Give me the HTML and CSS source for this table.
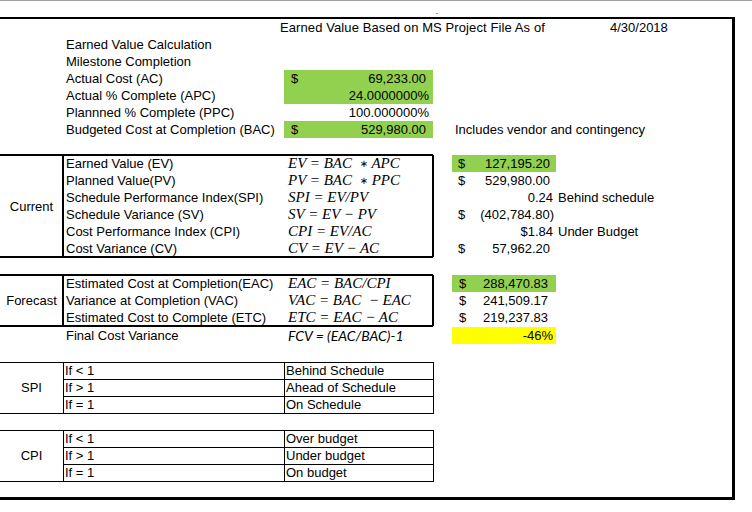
FILE: index.html
```html
<!DOCTYPE html>
<html>
<head>
<meta charset="utf-8">
<link rel="stylesheet" href="styles.css">
</head>
<body>
<div class="topline"></div>
<div class="speck"></div>
<div class="sheet">
  <div class="hdr">
    <div class="row"><span class="title">Earned Value Based on MS Project File As of</span><span class="date">4/30/2018</span></div>
    <div class="row"><span class="lbl">Earned Value Calculation</span></div>
    <div class="row"><span class="lbl">Milestone Completion</span></div>
    <div class="row"><span class="lbl">Actual Cost (AC)</span><span class="cell green acct"><span>$</span><span>69,233.00</span></span></div>
    <div class="row"><span class="lbl">Actual % Complete (APC)</span><span class="cell green num">24.0000000%</span></div>
    <div class="row"><span class="lbl">Plannned % Complete (PPC)</span><span class="cell num">100.000000%</span></div>
    <div class="row"><span class="lbl">Budgeted Cost at Completion (BAC)</span><span class="cell green acct"><span>$</span><span>529,980.00</span></span><span class="note">Includes vendor and contingency</span></div>
    <div class="row"></div>
  </div>

  <div class="grp">
    <div class="boxwrap">
      <div class="side">Current</div>
      <div class="box">
        <div class="row"><span class="blbl">Earned Value (EV)</span><span class="f">EV = BAC &nbsp;<span class="ast">∗</span> APC</span></div>
        <div class="row"><span class="blbl">Planned Value(PV)</span><span class="f">PV = BAC &nbsp;<span class="ast">∗</span> PPC</span></div>
        <div class="row"><span class="blbl">Schedule Performance Index(SPI)</span><span class="f">SPI = EV/PV</span></div>
        <div class="row"><span class="blbl">Schedule Variance (SV)</span><span class="f">SV = EV − PV</span></div>
        <div class="row"><span class="blbl">Cost Performance Index (CPI)</span><span class="f">CPI = EV/AC</span></div>
        <div class="row"><span class="blbl">Cost Variance (CV)</span><span class="f">CV = EV − AC</span></div>
      </div>
    </div>
    <div class="vals">
      <div class="row"><span class="vcell green acct"><span>$</span><span>127,195.20</span></span></div>
      <div class="row"><span class="vcell acct"><span>$</span><span>529,980.00</span></span></div>
      <div class="row"><span class="vcell num">0.24</span><span class="vnote">Behind schedule</span></div>
      <div class="row"><span class="vcell acct neg"><span>$</span><span>(402,784.80)</span></span></div>
      <div class="row"><span class="vcell num">$1.84</span><span class="vnote">Under Budget</span></div>
      <div class="row"><span class="vcell acct"><span>$</span><span>57,962.20</span></span></div>
    </div>
  </div>

  <div class="grp forecast">
    <div class="boxwrap">
      <div class="side">Forecast</div>
      <div class="box">
        <div class="row"><span class="blbl">Estimated Cost at Completion(EAC)</span><span class="f">EAC = BAC/CPI</span></div>
        <div class="row"><span class="blbl">Variance at Completion (VAC)</span><span class="f">VAC = BAC &nbsp;− EAC</span></div>
        <div class="row"><span class="blbl">Estimated Cost to Complete (ETC)</span><span class="f">ETC = EAC − AC</span></div>
      </div>
    </div>
    <div class="vals">
      <div class="row"><span class="vcell green acct fc"><span>$</span><span>288,470.83</span></span></div>
      <div class="row"><span class="vcell acct fc"><span>$</span><span>241,509.17</span></span></div>
      <div class="row"><span class="vcell acct fc"><span>$</span><span>219,237.83</span></span></div>
    </div>
  </div>

  <div class="row fcv"><span class="lbl">Final Cost Variance</span><span class="cell f2">FCV = (EAC/BAC)-1</span><span class="vcell yellow num pct">-46%</span></div>

  <div class="ctab spi">
    <div class="cside">SPI</div>
    <div>If &lt; 1</div><div>Behind Schedule</div>
    <div>If &gt; 1</div><div>Ahead of Schedule</div>
    <div>If = 1</div><div>On Schedule</div>
  </div>

  <div class="ctab cpi">
    <div class="cside">CPI</div>
    <div>If &lt; 1</div><div>Over budget</div>
    <div>If &gt; 1</div><div>Under budget</div>
    <div>If = 1</div><div>On budget</div>
  </div>
</div>
</body>
</html>
```

FILE: styles.css
```css
html, body {
  margin: 0;
  padding: 0;
  background: #fff;
}
body {
  font-family: "Liberation Sans", Arial, sans-serif;
  font-size: 13px;
  color: #000;
  width: 752px;
  height: 512px;
  overflow: hidden;
}
.topline {
  height: 1px;
  background: #a0a0a0;
}
.speck {
  margin: 12px 0 0 436px;
  width: 2px;
  height: 1px;
  background: #9a9a9a;
}
.sheet {
  margin-top: 3px;
  width: 732px;
  border-top: 2px solid #000;
  border-right: 3px solid #000;
  border-bottom: 3px solid #000;
  padding-bottom: 15px;
}
.row {
  display: flex;
  height: 17px;
  line-height: 17px;
  white-space: nowrap;
}
.title {
  margin-left: 280px;
  width: 330px;
  letter-spacing: 0.1px;
}
.lbl {
  margin-left: 63px;
  width: 221px;
  padding-left: 3px;
  box-sizing: border-box;
}
.cell {
  width: 149px;
  box-sizing: border-box;
}
.green { background: #92d050; }
.yellow { background: #ffff00; }
.acct {
  display: flex;
  justify-content: space-between;
  padding: 0 7px 0 7px;
}
.num {
  text-align: right;
  padding-right: 4px;
}
.note { margin-left: 22px; }

.grp { display: flex; }
.boxwrap {
  display: flex;
  width: 433px;
  box-shadow: 0 -1px 0 #000, inset 0 1px 0 #000, inset 0 -1px 0 #000, 0 1px 0 #000;
}
.side {
  width: 63px;
  display: flex;
  align-items: center;
  justify-content: center;
}
.box {
  width: 370px;
  box-shadow: inset 1px 0 0 #000, -1px 0 0 #000, inset -1px 0 0 #000, 1px 0 0 #000;
}
.blbl {
  width: 221px;
  padding-left: 3px;
  box-sizing: border-box;
}
.f {
  padding-left: 4px;
  font-family: "Liberation Serif", "Times New Roman", serif;
  font-style: italic;
  font-size: 15px;
}
.ast {
  font-family: "DejaVu Sans", sans-serif;
  font-style: normal;
  font-size: 10px;
  vertical-align: 1px;
}
.vals { margin-left: 19px; }
.vcell {
  width: 104px;
  box-sizing: border-box;
}
.vcell.acct { padding: 0 6px 0 6px; }
.vcell.acct.neg { padding-right: 2px; }
.vcell.acct.fc { padding: 0 8px 0 7px; }
.vcell.num { padding-right: 3px; }
.vnote { padding-left: 2px; }

.forecast { margin-top: 18px; }
.fcv {
  margin-top: 1px;
}
.f2 {
  padding-left: 4px;
  font-family: Lato, "Open Sans", sans-serif;
  font-style: italic;
  font-size: 14px;
}
.pct { margin-left: 19px; }

.ctab {
  display: grid;
  grid-template-columns: 63px 220px 148px;
  grid-template-rows: repeat(3, 16px);
  gap: 1px;
  background: #000;
  padding: 1px 1px 1px 0;
  width: max-content;
}
.ctab > div {
  background: #fff;
  line-height: 16px;
  padding-left: 1px;
  white-space: nowrap;
}
.ctab > .cside {
  grid-row: span 3;
  display: flex;
  align-items: center;
  justify-content: center;
  padding-left: 0;
}
.spi { margin-top: 18px; }
.cpi { margin-top: 16px; }
```
